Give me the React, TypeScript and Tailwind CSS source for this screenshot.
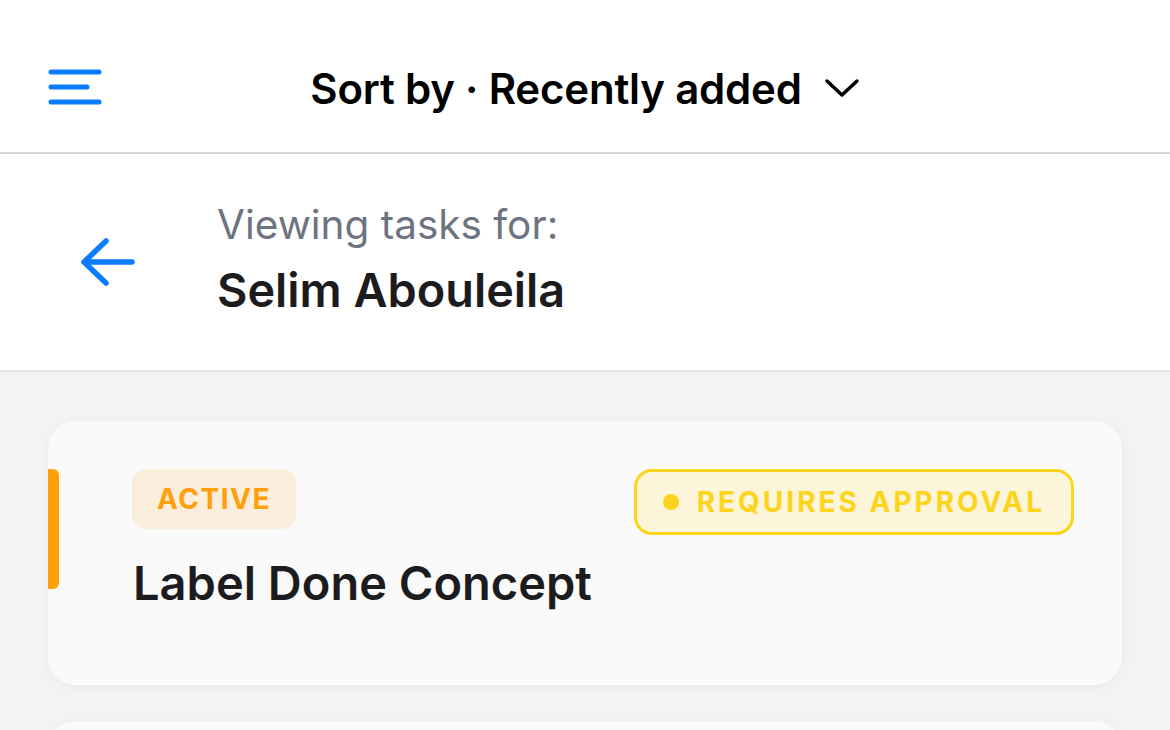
export default function App() {
  return (
    <div className="min-h-screen w-[1170px] bg-[#f2f3f5] font-['Inter',sans-serif] overflow-hidden">
      {/* HEADER */}
      <header className="h-[154px] bg-white border-b-2 border-[#d6d6da] grid grid-cols-[1fr_auto_1fr] items-center">
        <div className="pl-12 pt-[26px]">
          <svg width="56" height="40" viewBox="0 0 56 40" fill="none">
            <line x1="3" y1="3" x2="51" y2="3" stroke="#0b7cff" strokeWidth="5" strokeLinecap="round" />
            <line x1="3" y1="18" x2="39" y2="18" stroke="#0b7cff" strokeWidth="5" strokeLinecap="round" />
            <line x1="3" y1="33" x2="51" y2="33" stroke="#0b7cff" strokeWidth="5" strokeLinecap="round" />
          </svg>
        </div>
        <div className="flex items-center gap-[22px] pt-[24px]">
          <span className="text-[42px] font-semibold text-black tracking-[-0.2px]">
            Sort by · Recently added
          </span>
          <svg width="36" height="22" viewBox="0 0 36 22" fill="none">
            <path d="M3 4 L18 18 L33 4" stroke="#000" strokeWidth="3.5" strokeLinecap="round" strokeLinejoin="round" />
          </svg>
        </div>
        <div />
      </header>

      {/* VIEWING FOR */}
      <section className="h-[218px] bg-white border-b-2 border-[#e6e6ea] flex items-center">
        <div className="w-[217px] pl-[81px]">
          <svg width="56" height="50" viewBox="0 0 56 50" fill="none">
            <path d="M51 25 H3 M25 4 L3 25 L25 46" stroke="#0b7cff" strokeWidth="5.5" strokeLinecap="round" strokeLinejoin="round" />
          </svg>
        </div>
        <div className="flex flex-col">
          <span className="text-[40.5px] leading-[52px] text-[#6d7480]">Viewing tasks for:</span>
          <span className="mt-[3px] text-[46.8px] leading-[72px] font-semibold text-[#1c1c1e]">Selim Abouleila</span>
        </div>
      </section>

      {/* TASK LIST */}
      <main className="px-12 pt-[49px] flex flex-col gap-9">
        <div className="relative bg-[#fafafa] rounded-[28px] shadow-[0_2px_12px_rgba(0,0,0,0.04)] h-[264px] pt-12 pr-12 pl-[84px]">
          <div className="absolute left-0 top-12 w-[11px] h-[120px] bg-[#ff9f0a] rounded-r-[6px]" />
          <div className="flex items-start justify-between">
            <span className="h-[60px] px-[25px] flex items-center rounded-[14px] bg-[#fbeedd] text-[#ff9f0a] text-[28px] font-bold tracking-[1.5px]">
              ACTIVE
            </span>
            <span className="h-[66px] px-[26px] flex items-center gap-[18px] rounded-[18px] border-[3px] border-[#fcd41c] bg-[#fdf5da] text-[#fcd41c] text-[28px] font-bold tracking-[3px]">
              <span className="w-[16px] h-[16px] rounded-full bg-[#fcd41c]" />
              REQUIRES APPROVAL
            </span>
          </div>
          <div className="pl-[1px] mt-[18px] text-[47px] font-semibold text-[#1c1c1e] leading-[60px]">
            Label Done Concept
          </div>
        </div>
        <div className="bg-[#fafafa] rounded-[28px] shadow-[0_2px_12px_rgba(0,0,0,0.04)] h-[264px]" />
      </main>
    </div>
  );
}
